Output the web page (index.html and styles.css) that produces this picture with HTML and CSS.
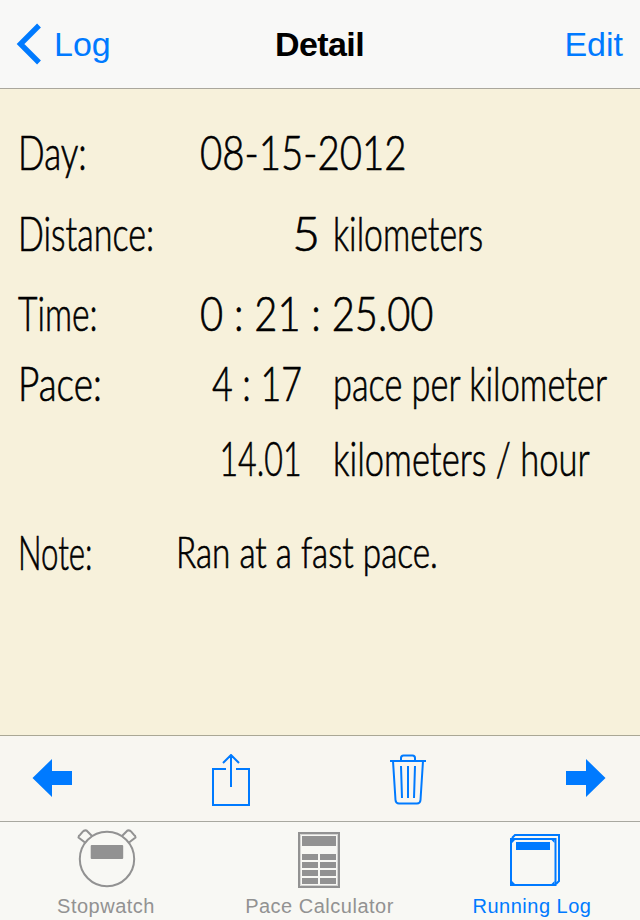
FILE: index.html
```html
<!DOCTYPE html>
<html lang="en">
<head>
<meta charset="utf-8">
<title>Detail</title>
<link rel="stylesheet" href="styles.css">
</head>
<body>
<div class="app">
  <header class="navbar">
    <a class="back"><svg width="26" height="42" viewBox="0 0 26 42"><path d="M23 2.500 4.500 21 23 39.500" fill="none" stroke="currentColor" stroke-width="5.400"/></svg><span>Log</span></a>
    <h1>Detail</h1>
    <a class="edit">Edit</a>
  </header>
  <main class="detail">
    <div class="row day"><span class="label">Day:</span><span class="value">08-15-2012</span></div>
    <div class="row distance"><span class="label">Distance:</span><span class="number">5</span><span class="unit">kilometers</span></div>
    <div class="row time"><span class="label">Time:</span><span class="value">0 : 21 : 25.00</span></div>
    <div class="row pace"><span class="label">Pace:</span><span class="number">4 : 17</span><span class="unit">pace per kilometer</span></div>
    <div class="row speed"><span class="label"></span><span class="number">14.01</span><span class="unit">kilometers / hour</span></div>
    <div class="row note"><span class="label">Note:</span><span class="value">Ran at a fast pace.</span></div>
  </main>
  <div class="toolbar">
    <svg width="40" height="52" viewBox="0 0 40 52"><path d="M0.500 24 20 5v12h20v14H20v12Z" fill="currentColor"/></svg>
    <svg width="38" height="52" viewBox="0 0 38 52"><path d="M14 15H1v36h36V15H24M19 33V1M11 9l8-8 8 8" fill="none" stroke="currentColor" stroke-width="2"/></svg>
    <svg width="36" height="52" viewBox="0 0 36 52"><g fill="none" stroke="currentColor" stroke-width="2"><path d="M0 7h36M11 7V4q0-2.500 2.500-2.500h9q2.500 0 2.500 2.500V7M3 7l2.500 39q.3 3.500 3.500 3.500h18q3.200 0 3.500-3.500L33 7"/><path d="m11 12 1 32M18 12v32M25 12l-1 32"/></g></svg>
    <svg width="40" height="52" viewBox="0 0 40 52"><path d="M39.500 24 20 5v12H0v14h20v12Z" fill="currentColor"/></svg>
  </div>
  <nav class="tabbar">
    <a class="tab stopwatch">
      <svg width="60" height="60" viewBox="0 0 60 60"><g fill="none" stroke="currentColor" stroke-width="2"><circle cx="30" cy="31" r="27.200"/><path d="M8 14.500 1.500 9.500q0-2 1.500-2.500L6 3.500q1-1.500 3.500-1L15 8M52 14.500l6.500-5q0-2-1.500-2.500L54 3.500q-1-1.500-3.500-1L45 8"/></g><rect x="13.700" y="17" width="32.500" height="14" rx="1" fill="currentColor"/></svg>
      <span>Stopwatch</span>
    </a>
    <a class="tab calculator">
      <svg width="42" height="60" viewBox="0 0 42 60"><path d="M1 5h40v54H1Z" fill="none" stroke="currentColor" stroke-width="2"/><path d="M2.500 6.500h37v51h-37Z" fill="none" stroke="currentColor" opacity=".35"/><path d="M4 8h34v10H4ZM4 26h16v6H4ZM22 26h16v6H22ZM4 34h16v6H4ZM22 34h16v6H22ZM4 42h16v6H4ZM22 42h16v6H22ZM4 50h16v6H4ZM22 50h16v6H22Z" fill="currentColor"/></svg>
      <span>Pace Calculator</span>
    </a>
    <a class="tab log active">
      <svg width="50" height="60" viewBox="0 0 50 60"><g fill="none" stroke="currentColor" stroke-width="2"><path d="M1 11h44.500v46H1Z"/><path d="M2 10l3-3h44v46l-3 3"/></g><path d="M2 12h3l-3 3M44.500 12h-3l3 3M2 56h3l-3-3M44.500 56h-3l3-3" fill="currentColor"/><path d="M6 14h34v8H6Z" fill="currentColor"/></svg>
      <span>Running Log</span>
    </a>
  </nav>
</div>
</body>
</html>
```

FILE: styles.css
```css
* { box-sizing: border-box; }
body { margin: 0; font-family: "Liberation Sans", Arial, sans-serif; }
svg { display: block; flex: none; }

.app { width: 640px; height: 920px; display: flex; flex-direction: column; background: #f7f1db; overflow: hidden; }

.navbar {
  height: 89px; flex: none; display: grid; grid-template-columns: 1fr auto 1fr; align-items: center;
  padding: 0 17px 0 16px; background: #f8f8f7; border-bottom: 1px solid #aaa79d;
  color: #007aff; font-size: 34px; line-height: 40px;
}
.back { display: flex; align-items: center; gap: 12px; }
.navbar h1 { margin: 0; color: #000; font-size: 34px; letter-spacing: -0.6px; }
.edit { justify-self: end; }

.detail {
  flex: 1; padding: 33px 0 0 18px; color: #000; font: 300 48px/60px Lato, sans-serif;
  white-space: nowrap; -webkit-text-stroke: .7px #000;
}
.row { display: grid; grid-template-columns: 182px 102px 1fr; height: 80px; }
.row.day { height: 81px; }
.row.time { height: 70px; }
.row.pace { height: 75px; }
.row.speed { height: 94px; }
.label, .value, .unit { justify-self: start; transform-origin: 0 0; }
.label, .unit { transform: scaleX(.71); }
.number { justify-self: end; transform-origin: 100% 0; }
.unit { margin-left: 31px; }
.value { transform: scaleX(.8); }
.day .label { transform: scaleX(.73); }
.distance { grid-template-columns: 182px 120px 1fr; }
.distance .number { transform: scaleX(1); }
.distance .unit { margin-left: 13px; transform: scaleX(.705); }
.time .value { transform: scaleX(.83); }
.time .label { transform: scaleX(.7); }
.pace .label { transform: scaleX(.77); }
.pace .number { transform: scaleX(.745); }
.pace .unit { transform: scaleX(.715); }
.speed .number { transform: scaleX(.67); }
.speed .unit { transform: scaleX(.72); }
.note { grid-template-columns: 158px 1fr; }
.note .label { transform: scaleX(.65); }
.note .value { font-size: 43px; transform: scaleX(.774); }

.toolbar {
  height: 86px; flex: none; display: flex; justify-content: space-between; align-items: center;
  padding: 2px 34px 0 32px; border-top: 1px solid #aaa795; background: #f8f6f1; color: #007aff;
}

.tabbar {
  height: 99px; flex: none; display: grid; grid-template-columns: 212px 215px 1fr;
  border-top: 1px solid #a8a8a0; background: #f8f8f4; color: #929292;
}
.tab { display: flex; flex-direction: column; align-items: center; padding-top: 6px; font-size: 20px; line-height: 24px; letter-spacing: .5px; }
.tab span { margin-top: 6px; }
.stopwatch svg { margin-left: 2px; }
.calculator svg { margin-left: -1px; }
.active { color: #007aff; }
.log { padding-right: 3px; }
.log svg { margin-left: 6px; }
```
